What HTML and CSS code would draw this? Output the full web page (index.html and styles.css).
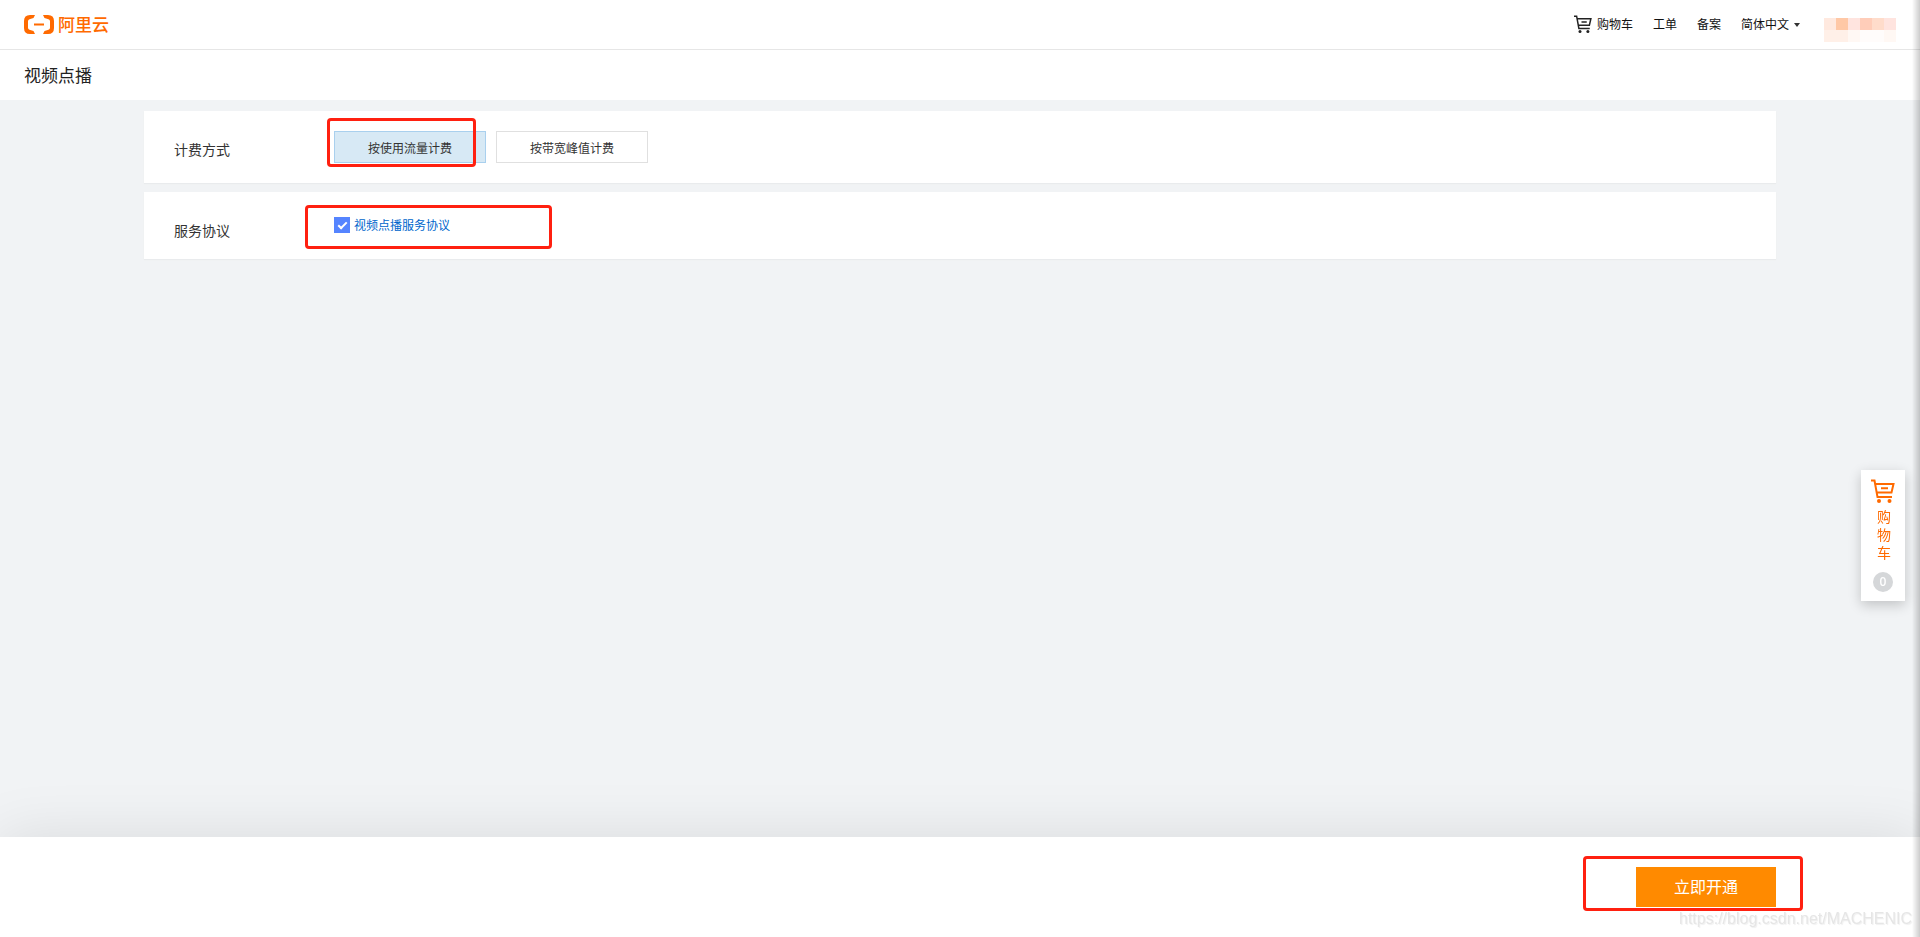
FILE: index.html
```html
<!DOCTYPE html>
<html lang="zh-CN">
	<head>
		<meta charset="utf-8" />
		<title>视频点播</title>
		<link rel="stylesheet" href="styles.css">
	</head>
	<body>
		<!-- 顶部导航 -->
		<header class="topbar">
			<a class="logo" href="#">
				<svg width="30" height="19" viewBox="0 0 30 19">
					<path d="M11 0H6Q0 0 0 6V13Q0 19 6 19H11L9.500 16L5.500 14.800Q4 14.300 4 12.800V6.200Q4 4.700 5.500 4.200L9.500 3Z"/>
					<path d="M19 0H24Q30 0 30 6V13Q30 19 24 19H19L20.500 16L24.500 14.800Q26 14.300 26 12.800V6.200Q26 4.700 24.500 4.200L20.500 3Z"/>
					<rect x="10" y="8.500" width="10" height="2"/>
				</svg>
				<span>阿里云</span>
			</a>
			<nav class="nav">
				<a class="nav-cart" href="#">
					<svg width="18" height="18" viewBox="0 0 24 24">
						<path d="M0 1.500H3.500L6.500 18H21M4.500 5H22.500L20.500 13.500H6M10 9.300H17"/>
						<circle cx="8" cy="22" r="2"/>
						<circle cx="18.500" cy="22" r="2"/>
					</svg>
					<span>购物车</span>
				</a>
				<a href="#">工单</a>
				<a href="#">备案</a>
				<button class="lang" type="button">简体中文<i class="caret"></i></button>
			</nav>
			<div class="account">
				<i class="c1"></i><i class="c4"></i><i class="c2"></i><i class="c3"></i><i class="c6"></i><i class="c2"></i>
				<i class="c0"></i><i class="c0"></i><i class="c5"></i><i class="c7"></i><i class="c7"></i><i class="c5"></i>
			</div>
		</header>

		<h1 class="page-title">视频点播</h1>

		<main class="content">
			<section class="panel billing">
				<h2 class="label">计费方式</h2>
				<div class="options">
					<button class="option active" type="button">按使用流量计费</button>
					<button class="option" type="button">按带宽峰值计费</button>
					<span class="mark mark-option"></span>
				</div>
			</section>

			<section class="panel agreement">
				<h2 class="label">服务协议</h2>
				<div class="agree">
					<input type="checkbox" id="agree" aria-labelledby="agreeLink" checked />
					<a id="agreeLink" href="#">视频点播服务协议</a>
					<span class="mark mark-agree"></span>
				</div>
			</section>
		</main>

		<!-- 右侧购物车 -->
		<a class="side-cart" href="#">
			<svg width="24" height="24" viewBox="0 0 24 24">
				<path d="M0 1.500H3.500L6.500 18H21M4.500 5H22.500L20.500 13.500H6M10 9.300H17"/>
				<circle cx="8" cy="22" r="2"/>
				<circle cx="18.500" cy="22" r="2"/>
			</svg>
			<span class="side-text">购物车</span>
			<span class="count">0</span>
		</a>

		<footer class="footer">
			<div class="submit">
				<button class="btn-open" type="button">立即开通</button>
				<span class="mark mark-open"></span>
			</div>
		</footer>

		<div class="edge"></div>
		<div class="watermark">https://blog.csdn.net/MACHENIC</div>
	</body>
</html>
```
FILE: styles.css
```css
*,
*::after {
	box-sizing: border-box;
}

body {
	margin: 0;
	min-height: 100vh;
	background-color: #f1f3f5;
	color: #333;
	font: 12px/18px "Noto Sans CJK SC", sans-serif;
}

a {
	color: inherit;
	text-decoration: none;
}

button {
	padding: 0;
	font: inherit;
	color: inherit;
	cursor: pointer;
}

/* 顶部导航 */
.topbar {
	display: flex;
	align-items: center;
	height: 50px;
	padding: 0 24px;
	background-color: #fff;
	border-bottom: 1px solid #e6e6e6;
}

.logo {
	display: flex;
	align-items: center;
	gap: 4px;
	color: #ff6a00;
	font-size: 17px;
	font-weight: 500;
}

.logo span {
	padding-bottom: 2px;
}

.logo svg {
	fill: #ff6a00;
}

.nav {
	display: flex;
	align-items: center;
	gap: 20px;
	margin-left: auto;
	padding-bottom: 2px;
	color: #111;
}

.nav-cart {
	display: flex;
	align-items: center;
	gap: 5px;
}

.nav-cart svg,
.side-cart svg {
	fill: #222;
	stroke: #222;
	stroke-width: 2;
}

.nav-cart path,
.side-cart path {
	fill: none;
}

.nav-cart circle,
.side-cart circle {
	stroke: none;
}

.lang {
	display: flex;
	align-items: center;
	gap: 5px;
	border: 0;
	background: none;
}

.caret {
	margin-top: 2px;
	border: 3px solid transparent;
	border-top: 4px solid #333;
	border-bottom: 0;
}

.account {
	display: grid;
	grid-template-columns: repeat(6, 12px);
	grid-auto-rows: 12px;
	margin: 10px 0 0 24px;
}

.c0 { background-color: #fff0e8; }
.c1 { background-color: #ffe9df; }
.c2 { background-color: #ffe4df; }
.c3 { background-color: #ffcdb9; }
.c4 { background-color: #ffc8a6; }
.c5 { background-color: #fff8f4; }
.c6 { background-color: #ffdccb; }
.c7 { background-color: #fffcfb; }

.page-title {
	margin: 0;
	padding: 0 24px;
	height: 50px;
	background-color: #fff;
	color: #222;
	font-size: 17px;
	font-weight: 400;
	line-height: 50px;
}

/* 内容区 */
.content {
	width: 85%;
	margin: 11px auto 100px;
}

.panel {
	display: flex;
	margin-bottom: 9px;
	padding-left: 30px;
	background-color: #fff;
	box-shadow: 0 1px 1px #e9ebed;
}

.billing {
	padding-top: 20px;
	padding-bottom: 20px;
}

.agreement {
	padding-top: 25px;
	padding-bottom: 18px;
}

.label {
	width: 160px;
	margin: 0;
	font-size: 14px;
	font-weight: 400;
	line-height: 24px;
	padding-top: 6px;
}

.agreement .label {
	padding-top: 1px;
	margin-bottom: -1px;
}

.options {
	display: flex;
	gap: 10px;
	position: relative;
}

.option {
	width: 152px;
	height: 32px;
	padding-top: 2px;
	border: 1px solid #e0e0e0;
	background-color: #fff;
}

.option.active {
	border-color: #a9d0ee;
	background-color: #d7e9f5;
}

.agree {
	display: flex;
	align-items: center;
	gap: 4px;
	height: 16px;
	position: relative;
	color: #06c;
}

.agree input {
	appearance: none;
	width: 16px;
	height: 16px;
	margin: 0;
	background-color: #5584ff;
	position: relative;
}

.agree input:checked::after {
	content: "";
	position: absolute;
	left: 6px;
	top: 3px;
	width: 5px;
	height: 9px;
	border: solid #fff;
	border-width: 0 2px 2px 0;
	transform: rotate(45deg);
}

/* 红色标注框 */
.mark {
	position: absolute;
	border: 3px solid #ff2010;
	border-radius: 4px;
	pointer-events: none;
}

.mark-option {
	left: -7px;
	top: -13px;
	width: 149px;
	height: 49px;
}

.mark-agree {
	left: -29px;
	top: -12px;
	width: 247px;
	height: 44px;
}

.mark-open {
	left: -53px;
	right: -27px;
	top: -11px;
	bottom: -4px;
}

/* 右侧购物车 */
.side-cart {
	position: fixed;
	right: 15px;
	top: 470px;
	display: flex;
	flex-direction: column;
	align-items: center;
	width: 44px;
	padding: 9px 0;
	background-color: #fff;
	box-shadow: 0 4px 12px rgba(0, 0, 0, 0.2);
	color: #ff6a00;
}

.side-cart svg {
	fill: #ff6a00;
	stroke: #ff6a00;
}

.side-text {
	width: 14px;
	margin: 4px 0 11px 2px;
	font-size: 14px;
	line-height: 18px;
}

.count {
	width: 20px;
	height: 20px;
	border-radius: 50%;
	background-color: #d5d7d9;
	color: #fff;
	font-family: "Open Sans", sans-serif;
	font-weight: 600;
	line-height: 20px;
	text-align: center;
}

/* 底部操作栏 */
.footer {
	position: fixed;
	left: 0;
	right: 0;
	bottom: 0;
	display: flex;
	justify-content: flex-end;
	padding: 30px 7.5%;
	background-color: #fff;
	box-shadow: 0 0 60px rgba(0, 0, 0, 0.1);
}

.submit {
	position: relative;
}

.btn-open {
	display: block;
	width: 140px;
	height: 40px;
	padding-bottom: 2px;
	border: 0;
	background-color: #ff8a00;
	color: #fff;
	font-size: 16px;
}

.edge {
	position: fixed;
	top: 0;
	right: 0;
	bottom: 0;
	width: 8px;
	background: linear-gradient(to right, rgba(0, 0, 0, 0), rgba(0, 0, 0, 0.2));
	pointer-events: none;
}

.watermark {
	position: fixed;
	right: 8px;
	bottom: 8px;
	color: #e6e6e6;
	text-shadow: 1px 1px 1px #f0f0f0;
	font: 16px/20px "Liberation Sans", sans-serif;
}
```
